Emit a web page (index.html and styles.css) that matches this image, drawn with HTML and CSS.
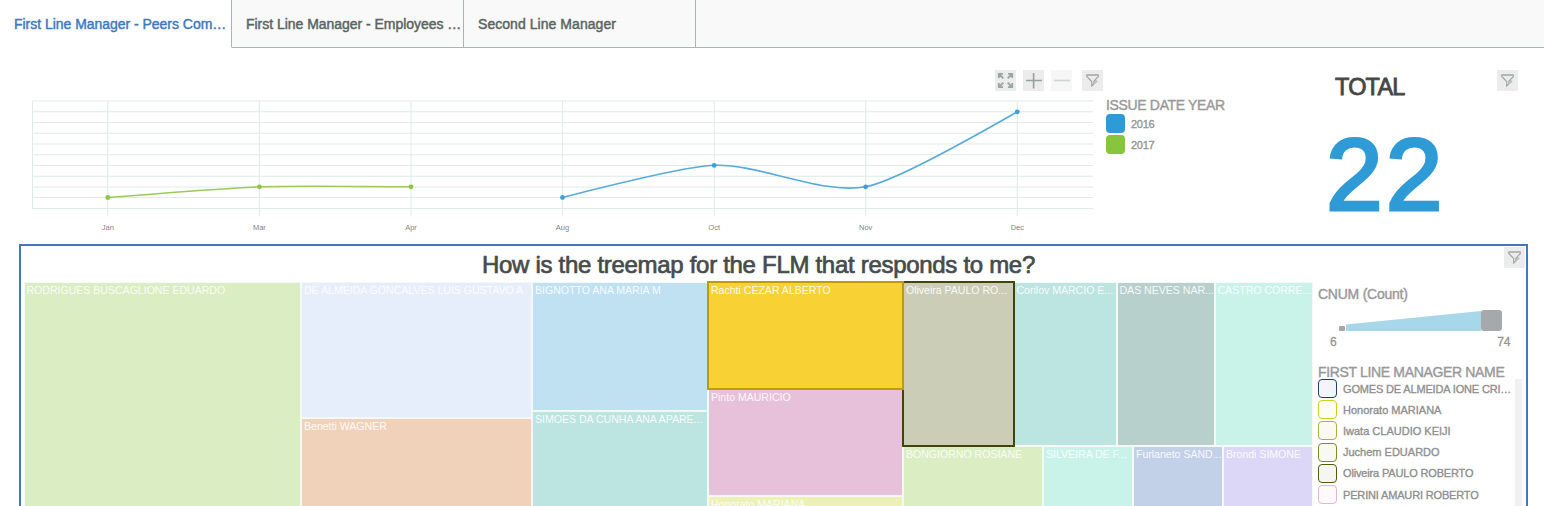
FILE: index.html
```html
<!DOCTYPE html>
<html lang="en">
<head>
<meta charset="utf-8">
<title>First Line Manager</title>
<link rel="stylesheet" href="styles.css">
</head>
<body>
<svg class="defs" width="0" height="0">
  <symbol id="filter" viewBox="0 0 21 21">
    <path d="M4.300 5h12.400" fill="none" stroke="#98a4a0" stroke-width="1.400"/>
    <path d="M4.800 5.300v1.200l4.900 5V16l2-1.800M16.400 5.300v1.200l-4.500 4.700v3" fill="none" stroke="#98a4a0" stroke-width="1.100"/>
    <path d="M12 13.600l2.600-2.400M12.200 11.300c1-1 2.500-.8 2.600.1s-1 1.500-1.900 1.300" fill="none" stroke="#a3adaa" stroke-width=".9"/>
  </symbol>
</svg>
<nav class="tabs">
  <div class="tab active"><span class="t1">First Line Manager - Peers Com…</span></div>
  <div class="tab"><span class="t2">First Line Manager - Employees …</span></div>
  <div class="tab"><span class="t3">Second Line Manager</span></div>
  <div class="tab-rest"></div>
</nav>
<section class="top">
  <div class="chart">
    <div class="toolbar">
      <span class="btn"><svg width="21" height="21" fill="none" stroke="#9aa6a2" stroke-width="1.800"><path d="M3.800 8V3.800H8M4 4l4.300 4.300M13 3.800h4.200V8M17 4l-4.300 4.300M3.800 13v4.200H8M4 17l4.300-4.300M17.200 13v4.200H13M17 17l-4.300-4.300"/></svg></span>
      <span class="btn"><svg width="21" height="21" stroke="#95a19d" stroke-width="1.600"><path d="M3 10.500h16M10.600 3v15.500"/></svg></span>
      <span class="btn faded"><svg width="21" height="21" stroke="#95a19d" stroke-width="1.600"><path d="M3 10.500h16"/></svg></span>
      <span class="btn last"><svg width="21" height="21"><use href="#filter"/></svg></span>
    </div>
    <svg class="plot" width="1104" height="150" viewBox="0 91 1104 150">
      <path class="grid" d="M32 101.000H1093M32 111.750H1093M32 122.500H1093M32 133.250H1093M32 144.000H1093M32 154.750H1093M32 165.500H1093M32 176.250H1093M32 187.000H1093M32 197.500H1093M32 208.500H1093M32.500 101V208.500M107.800 101V216M259.400 101V216M411 101V216M562.500 101V216M714.200 101V216M865.700 101V216M1017.300 101V216"/>
      <path class="line green" d="M107.800 197.500Q229.100 187.900 259.400 186.800Q289.700 185.700 411 186.800"/>
      <path class="line blue" d="M562.500 197.500Q683.900 166.400 714.200 165.300C759.700 163.700 820.300 194.800 865.700 186.800Q896.100 181.500 1017.300 111.800"/>
      <g class="gdot"><circle cx="107.800" cy="197.500" r="2.400"/><circle cx="259.400" cy="186.800" r="2.400"/><circle cx="411" cy="186.800" r="2.400"/></g>
      <g class="bdot"><circle cx="562.500" cy="197.500" r="2.400"/><circle cx="714.200" cy="165.400" r="2.400"/><circle cx="865.700" cy="186.800" r="2.400"/><circle cx="1017.300" cy="111.800" r="2.400"/></g>
      <g class="axis"><text x="107.800" y="230">Jan</text><text x="259.400" y="230">Mar</text><text x="411" y="230">Apr</text><text x="562.500" y="230">Aug</text><text x="714.200" y="230">Oct</text><text x="865.700" y="230">Nov</text><text x="1017.300" y="230">Dec</text></g>
    </svg>
  </div>
  <div class="years">
    <div class="legend-title yt">ISSUE DATE YEAR</div>
    <div class="year"><i class="sw b"></i><span>2016</span></div>
    <div class="year"><i class="sw g"></i><span>2017</span></div>
  </div>
  <div class="kpi">
    <div class="kpi-title">TOTAL</div>
    <div class="kpi-value">22</div>
  </div>
  <span class="btn kpi-filter"><svg width="21" height="21"><use href="#filter"/></svg></span>
</section>
<section class="panel">
  <header class="panel-head"><h1>How is the treemap for the FLM that responds to me?</h1><span class="btn"><svg width="21" height="21"><use href="#filter"/></svg></span></header>
  <div class="panel-body">
    <div class="treemap">
      <div class="col c1"><div class="tile lime fill"><span>RODRIGUES BUSCAGLIONE EDUARDO</span></div></div>
      <div class="col c2"><div class="tile lav r1"><span>DE ALMEIDA GONCALVES LUIS GUSTAVO A</span></div><div class="tile peach fill"><span>Benetti WAGNER</span></div></div>
      <div class="col c3"><div class="tile sky r2"><span>BIGNOTTO ANA MARIA M</span></div><div class="tile teal fill"><span>SIMOES DA CUNHA ANA APARE...</span></div></div>
      <div class="col c4"><div class="tile gold r3"><span>Rachti CEZAR ALBERTO</span></div><div class="tile pink r4"><span>Pinto MAURICIO</span></div><div class="tile yellow fill"><span>Honorato MARIANA</span></div></div>
      <div class="col c5">
        <div class="row upper"><div class="tile olive w1"><span>Oliveira PAULO RO...</span></div><div class="tile teal w2"><span>Corilov MARCIO E...</span></div><div class="tile gray w3"><span>DAS NEVES NAR...</span></div><div class="tile mint w4"><span>CASTRO CORRE...</span></div></div>
        <div class="row fill"><div class="tile lime v1"><span>BONGIORNO ROSIANE</span></div><div class="tile mint v2"><span>SILVEIRA DE F...</span></div><div class="tile steel v2"><span>Furlaneto SAND...</span></div><div class="tile lilac v2"><span>Brondi SIMONE</span></div></div>
      </div>
    </div>
    <aside class="side">
      <div class="legend-title cnum">CNUM (Count)</div>
      <svg class="scale" width="200" height="24"><rect x="21" y="18" width="6" height="5" rx="1" fill="#a5a9ac"/><path d="M28 16.500L163 3v20H28z" fill="#a8d7ea"/><rect x="163" y="2" width="21" height="21" rx="3" fill="#a5a9ac"/></svg>
      <div class="range"><span>6</span><span>74</span></div>
      <div class="legend-title flm">FIRST LINE MANAGER NAME</div>
      <div class="list">
        <ul>
          <li><i class="box navy"></i><span class="tight">GOMES DE ALMEIDA IONE CRI…</span></li>
          <li><i class="box ylw"></i><span>Honorato MARIANA</span></li>
          <li><i class="box khaki"></i><span>Iwata CLAUDIO KEIJI</span></li>
          <li><i class="box moss"></i><span>Juchem EDUARDO</span></li>
          <li><i class="box dark"></i><span class="tight">Oliveira PAULO ROBERTO</span></li>
          <li><i class="box rose"></i><span class="tight">PERINI AMAURI ROBERTO</span></li>
        </ul>
        <div class="scrollbar"></div>
      </div>
    </aside>
  </div>
</section>
</body>
</html>
```
FILE: styles.css
```css
* { box-sizing: border-box; }
body { margin: 0; width: 1544px; height: 506px; overflow: hidden; background: #fff; font-family: "Liberation Sans", Arial, sans-serif; }
.defs { display: block; }
.tabs { display: flex; height: 48px; }
.tab { width: 232px; padding: 16px 0 0 14px; border-right: 1px solid #aab5b1; border-bottom: 1px solid #aab5b1; background: #f9f9f9; color: #5a6462; font-size: 14px; line-height: 16px; white-space: nowrap; -webkit-text-stroke: .45px; }
.tab.active { background: #fff; border-bottom-color: #fff; color: #4178be; }
.t1, .t2 { letter-spacing: -.03px; }
.t3 { letter-spacing: .05px; }
.tab-rest { flex: 1; background: #f9f9f9; border-bottom: 1px solid #aab5b1; }

.top { display: flex; height: 196px; }
.chart { width: 1104px; padding-top: 22px; }
.toolbar { display: flex; justify-content: flex-end; gap: 7px; padding-right: 1px; }
.btn { display: block; width: 21px; height: 21px; background: #ececec; flex: none; }
.btn svg { display: block; }
.btn.last { margin-left: 3px; }
.btn.faded { opacity: .45; }
.plot { display: block; }
.grid { stroke: #dfeae9; stroke-width: 1; fill: none; }
.line { fill: none; stroke-width: 1.600; }
.green { stroke: #9acb55; }
.blue { stroke: #55abdc; }
.gdot { fill: #8cc63f; }
.bdot { fill: #3d9fd8; }
.axis { font-size: 7.500px; fill: #858585; text-anchor: middle; }
.years { width: 200px; padding: 49px 0 0 2px; }
.legend-title { font-size: 14px; line-height: 16px; color: #999; white-space: nowrap; -webkit-text-stroke: .4px; letter-spacing: -.34px; }
.year { display: flex; align-items: center; gap: 6px; height: 20px; margin-bottom: 1px; font-size: 11px; color: #949494; -webkit-text-stroke: .35px; letter-spacing: -.3px; }
.year span { padding-top: 2px; }
.sw { width: 19px; height: 19px; border-radius: 4px; }
.sw.b { background: #2f9bd6; }
.sw.g { background: #87c53c; }
.kpi { width: 193px; padding: 25px 0 0 24px; }
.kpi-title { padding-left: 7px; font-size: 23.500px; line-height: 28px; color: #464646; -webkit-text-stroke: .8px; letter-spacing: -.8px; }
.kpi-value { margin: 21px 0 0 -2px; font-size: 102px; line-height: 106px; color: #2f9bd6; -webkit-text-stroke: 3.200px; letter-spacing: 3px; }
.kpi-filter { margin-top: 22px; }

.panel { width: 1509px; height: 262px; margin-left: 19px; border: 2px solid #4178be; border-bottom: 0; overflow: hidden; }
.panel-head { display: flex; height: 36px; padding: 1px 1px 0 0; }
h1 { flex: 1; margin: 0; padding: 4px 0 0 461px; font-size: 24px; line-height: 28px; font-weight: 400; color: #464c4b; -webkit-text-stroke: .7px; letter-spacing: -.3px; white-space: nowrap; }
.panel-body { display: flex; height: 226px; padding-left: 2.500px; }
.treemap { display: flex; width: 1290px; }
.col { display: flex; flex-direction: column; flex: none; }
.c1 { width: 277.500px; }
.c2 { width: 231px; }
.c3 { width: 176px; }
.c4 { width: 195px; }
.c5 { width: 410px; }
.row { display: flex; }
.fill { flex: 1; }
.tile { position: relative; padding: 1px 0 0 2px; border: 1px solid #f5f9f6; overflow: hidden; white-space: nowrap; font-size: 10.600px; letter-spacing: -.03px; line-height: 13px; color: rgba(255,255,255,.9); }
.r1 { height: 136px; }
.r2 { height: 129px; }
.r3 { height: 107px; }
.r4 { height: 107px; }
.upper { height: 164px; }
.w1 { width: 110.500px; }
.w2 { width: 103px; }
.w3 { width: 98px; }
.w4 { width: 98.500px; }
.v1 { width: 140px; }
.v2 { width: 90px; }
.lime { background: #daedc3; }
.lav { background: #e7eefb; }
.peach { background: #f0d2ba; }
.sky { background: #bfe1f2; }
.teal { background: #bce4e0; }
.gold { background: #f8d235; outline: 2px solid #bd9b0b; outline-offset: -1px; border-color: #bd9b0b; z-index: 2; }
.pink { background: #e7c1d9; }
.yellow { background: #edf1b8; }
.olive { background: #cccdb6; outline: 2px solid #414509; outline-offset: -1px; border-color: #414509; z-index: 1; }
.gray { background: #b7d0cc; }
.mint { background: #c9f3e9; }
.steel { background: #c2d0e8; }
.lilac { background: #dcd7f7; }

.side { width: 208px; padding: 4px 0 0 4.500px; }
.cnum { letter-spacing: -.25px; }
.scale { display: block; margin-top: 6px; }
.range { display: flex; justify-content: space-between; width: 192.500px; padding-left: 12px; margin-top: 1px; font-size: 12px; line-height: 18px; color: #949494; -webkit-text-stroke: .3px; }
.flm { margin: 13px 0 -1px; }
.list { display: flex; height: 127px; overflow: hidden; }
.list ul { list-style: none; width: 197px; flex: none; margin: -1px 0 0; padding: 0; }
.list li { display: flex; align-items: center; gap: 6px; height: 21.200px; font-size: 11px; color: #8f8f8f; -webkit-text-stroke: .35px; white-space: nowrap; }
.tight { letter-spacing: -.16px; }
.box { width: 19px; height: 19px; border: 1px solid; border-radius: 4px; flex: none; }
.navy { border-color: #1d3e78; background: #f3f5fa; }
.ylw { border-color: #c8d41c; background: #fcfef4; }
.khaki { border-color: #adb13b; background: #fafaf3; }
.moss { border-color: #838c19; background: #f8f9f3; }
.dark { border-color: #525a0b; background: #f5f6f1; }
.rose { border-color: #e9b3cb; background: #fefafc; }
.scrollbar { width: 8px; flex: none; background: #f1f1f1; }
```
